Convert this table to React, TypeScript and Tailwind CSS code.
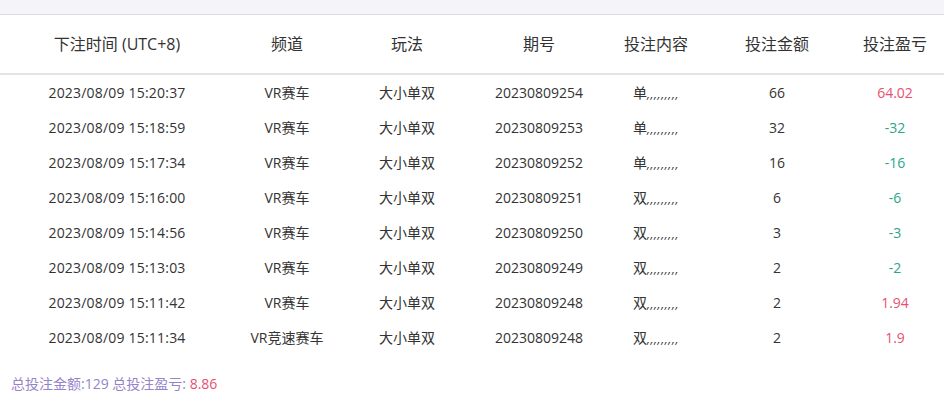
const rows = [
    { time: "2023/08/09 15:20:37", ch: "VR赛车", issue: "20230809254", bet: "单", amt: "66", pl: "64.02" },
    { time: "2023/08/09 15:18:59", ch: "VR赛车", issue: "20230809253", bet: "单", amt: "32", pl: "-32" },
    { time: "2023/08/09 15:17:34", ch: "VR赛车", issue: "20230809252", bet: "单", amt: "16", pl: "-16" },
    { time: "2023/08/09 15:16:00", ch: "VR赛车", issue: "20230809251", bet: "双", amt: "6", pl: "-6" },
    { time: "2023/08/09 15:14:56", ch: "VR赛车", issue: "20230809250", bet: "双", amt: "3", pl: "-3" },
    { time: "2023/08/09 15:13:03", ch: "VR赛车", issue: "20230809249", bet: "双", amt: "2", pl: "-2" },
    { time: "2023/08/09 15:11:42", ch: "VR赛车", issue: "20230809248", bet: "双", amt: "2", pl: "1.94" },
    { time: "2023/08/09 15:11:34", ch: "VR竞速赛车", issue: "20230809248", bet: "双", amt: "2", pl: "1.9" },
];

const cols = "grid grid-cols-[234px_106px_134px_130px_104px_138px_98px]";

export default function App() {
    return (
        <div className="h-[405px] w-[944px] overflow-hidden bg-white text-[#333] [font-family:'Open_Sans','Noto_Sans_CJK_SC',sans-serif]">
            <div className="h-[15px] border-b border-[#dcdce0] bg-[#f5f5f9]" />
            <div className={`${cols} h-[60px] items-center border-b-2 border-[#e4e4e6] text-center text-[16px]`}>
                <div>下注时间 (UTC+8)</div>
                <div>频道</div>
                <div>玩法</div>
                <div>期号</div>
                <div>投注内容</div>
                <div>投注金额</div>
                <div>投注盈亏</div>
            </div>
            {rows.map((r, i) => {
                const neg = r.pl.startsWith("-");
                return (
                    <div key={i} className={`${cols} h-[35px] items-center text-center text-[14px]`}>
                        <div className="tracking-[0.2px]">{r.time}</div>
                        <div>{r.ch}</div>
                        <div>大小单双</div>
                        <div>{r.issue}</div>
                        <div>
                            {r.bet}
                            <span className="text-[12px] italic tracking-[0.6px]">,,,,,,,,,</span>
                        </div>
                        <div>{r.amt}</div>
                        <div className={neg ? "text-[#2aa58a]" : "text-[#e8506f]"}>{r.pl}</div>
                    </div>
                );
            })}
            <div className="mt-[18px] pl-[11px] text-[14px] text-[#9584c8]">
                总投注金额:129 总投注盈亏: <span className="text-[#e8506f]">8.86</span>
            </div>
        </div>
    );
}
